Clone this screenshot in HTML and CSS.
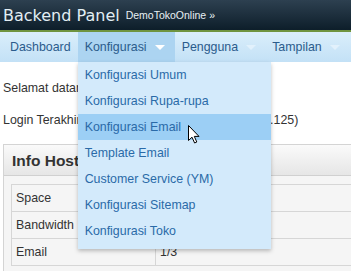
FILE: index.html
```html
<!DOCTYPE html>
<html lang="id">
<head>
  <meta charset="UTF-8" />
  <title>Backend Panel</title>
  <link rel="stylesheet" href="styles.css">
</head>
<body>
  <header class="top">
    <h1>Backend Panel</h1>
    <span class="shop">DemoTokoOnline &raquo;</span>
  </header>
  <nav class="menu">
    <div class="menu-item">Dashboard</div>
    <div class="menu-item active">Konfigurasi <span class="arrow"></span>
      <ul class="dropdown">
        <li>Konfigurasi Umum</li>
        <li>Konfigurasi Rupa-rupa</li>
        <li class="hover">Konfigurasi Email
          <svg class="cursor" width="12" height="19" viewBox="0 0 12 19">
            <path d="M0.5 0.5 L0.5 15.5 L4 12.2 L6.6 18 L8.8 17 L6.3 11.4 L11 11.4 Z" fill="#fff" stroke="#000" stroke-width="1" stroke-linejoin="round" />
          </svg>
        </li>
        <li>Template Email</li>
        <li>Customer Service (YM)</li>
        <li>Konfigurasi Sitemap</li>
        <li>Konfigurasi Toko</li>
      </ul>
    </div>
    <div class="menu-item">Pengguna <span class="arrow faint"></span></div>
    <div class="menu-item">Tampilan <span class="arrow faint"></span></div>
  </nav>
  <main class="content">
    <p>Selamat datang, admin</p>
    <p>Login Terakhir : 12 Jan 2013 10:35 (192.168.100.125)</p>
    <section class="box">
      <h2>Info Hosting</h2>
      <div class="box-body">
        <table>
          <tr><td class="label">Space</td><td>120 MB / 500 MB</td></tr>
          <tr><td class="label">Bandwidth</td><td>2 GB / 10 GB</td></tr>
          <tr><td class="label">Email</td><td>1/3</td></tr>
        </table>
      </div>
    </section>
  </main>
</body>
</html>
```

FILE: styles.css
```css
body {
  margin: 0;
  font-family: "Liberation Sans", Arial, sans-serif;
  font-size: 12.4px;
  color: #333;
  background: #fff;
  overflow: hidden;
}

.top {
  height: 30px;
  background: linear-gradient(to bottom, #2d4050, #0d1e2a);
  border-bottom: 2px solid #6f9440;
  display: flex;
  align-items: center;
  padding-left: 3px;
}

.top h1 {
  margin: 0;
  font-family: "DejaVu Sans", sans-serif;
  font-weight: normal;
  font-size: 16px;
  color: #e2eef4;
}

.shop {
  margin-left: 6px;
  font-size: 10.5px;
  color: #e8f0f4;
}

.menu {
  height: 30px;
  background: linear-gradient(to bottom, #daeefb, #c3e1f6);
  display: flex;
  padding-left: 3px;
}

.menu-item {
  position: relative;
  display: flex;
  align-items: center;
  padding: 0 7px;
  color: #2b5c8c;
}

.menu-item.active {
  background: #acd4f1;
  padding-right: 8px;
}

.arrow {
  display: inline-block;
  margin-left: 8px;
  margin-right: 2px;
  border-left: 5px solid transparent;
  border-right: 5px solid transparent;
  border-top: 5px solid #fff;
}

.arrow.faint {
  border-top-color: #e2f1fc;
}

.dropdown {
  position: absolute;
  top: 30px;
  left: 0;
  width: 193px;
  margin: 0;
  padding: 0 0 5px;
  list-style: none;
  background: #d3eafb;
  box-shadow: 0 2px 4px rgba(0, 0, 0, 0.25);
  z-index: 5;
}

.dropdown li {
  position: relative;
  height: 26px;
  line-height: 26px;
  padding-left: 7px;
  color: #2a6aa8;
  white-space: nowrap;
}

.dropdown li.hover {
  background: #9ccff5;
}

.cursor {
  position: absolute;
  left: 110px;
  top: 11px;
}

.content {
  padding: 18px 0 0 3px;
}

.content p {
  margin: 0 0 16px;
  line-height: 16px;
  white-space: nowrap;
}

.box {
  width: 500px;
  border: 1px solid #d4d4d4;
  background: #f5f5f5;
}

.box h2 {
  margin: 0;
  height: 30px;
  line-height: 31px;
  padding-left: 8px;
  font-size: 15.5px;
  color: #333;
  background: linear-gradient(to bottom, #fafafa, #e6e6e6);
  border-bottom: 1px solid #d0d0d0;
}

.box-body {
  padding: 8px 0 8px 7px;
}

table {
  width: 100%;
  border-collapse: collapse;
}

td {
  height: 26px;
  padding: 0 4px;
  border: 1px solid #d6d6d6;
  color: #333;
}

td.label {
  width: 135px;
}
```
